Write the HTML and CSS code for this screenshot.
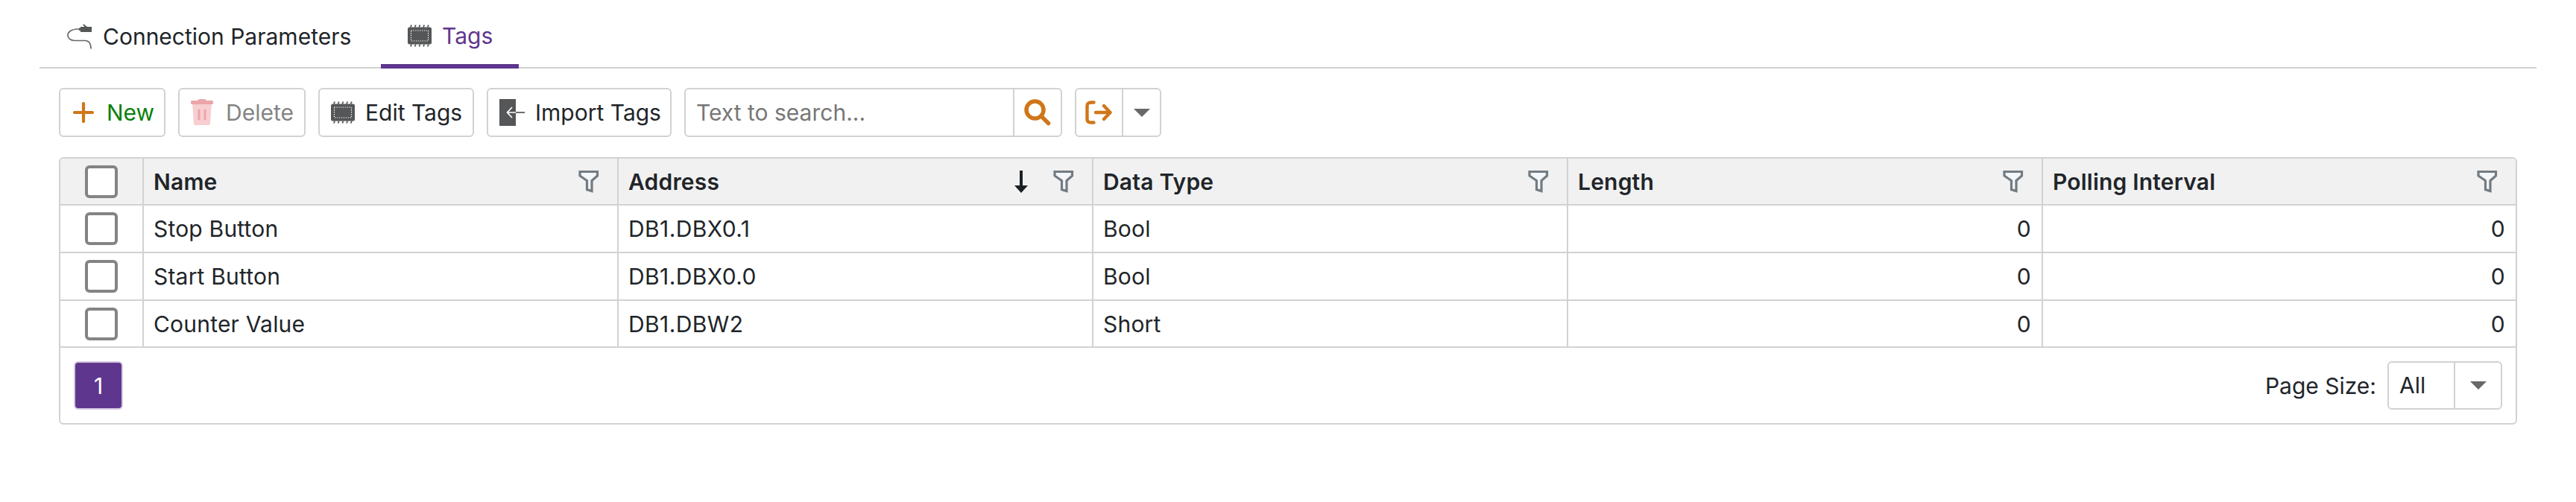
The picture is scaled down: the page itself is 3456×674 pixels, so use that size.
FILE: index.html
```html
<!DOCTYPE html>
<html lang="en">
<head>
    <meta charset="UTF-8">
    <meta name="viewport" content="width=device-width, initial-scale=1.0">
    <title>Tags</title>
    <link rel="stylesheet" href="styles.css">
</head>
<body>
    <!-- shared icons -->
    <svg class="sprite" aria-hidden="true">
        <symbol id="chip" viewBox="0 0 32 30">
            <path d="M4 3.500l1-3M9.700 3.500l1-3M15.400 3.500l1-3M21.100 3.500l1-3M26.800 3.500l1-3M4 29.500l1-3M9.700 29.500l1-3M15.400 29.500l1-3M21.100 29.500l1-3M26.800 29.500l1-3" stroke="#555" stroke-width="1.800"/>
            <rect x="0" y="3.500" width="32" height="23" rx="2.500" fill="#545657"/>
            <rect x="4.500" y="8" width="23" height="14" fill="none" stroke="#fff" stroke-width="1.200" stroke-dasharray="1.300 1.600"/>
        </symbol>
        <symbol id="filter" viewBox="0 0 28 32">
            <path d="M2 2.500h23.500V8L18 14.500v14l-6.500-2v-12L2 8z" fill="#f3f7fa" stroke="#737b82" stroke-width="3.200"/>
        </symbol>
        <symbol id="caret" viewBox="0 0 22 11">
            <path d="M0 0h22L11 11z" fill="#66686a"/>
        </symbol>
    </svg>

    <div class="tabs">
        <div class="tab">
            <svg class="tab-icon" viewBox="0 0 34 34">
                <path d="M17 7h-4C-3 8-2 22 10 22.500h14q8 0 8 11" fill="none" stroke="#66686a" stroke-width="1.700"/>
                <path d="M16 5.500h2V4h5.500l-2.500-3 1.500-.5L27 4h6v7H18V9h-2z" fill="#545657"/>
            </svg>
            <span>Connection Parameters</span>
        </div>
        <div class="tab active">
            <svg class="chip"><use href="#chip"/></svg>
            <span>Tags</span>
        </div>
    </div>

    <div class="toolbar">
        <button class="btn btn-new">
            <svg width="30" height="28" viewBox="0 0 30 28"><path d="M15 2v24M3 14h24" stroke="#d0761a" stroke-width="4.200" stroke-linecap="round"/></svg>
            <span>New</span>
        </button>
        <button class="btn btn-delete" disabled>
            <svg width="32" height="36" viewBox="0 0 32 36">
                <path d="M3 5h26l-2 28q0 2-3 2H8q-3 0-3-2z" fill="#f7ced1"/>
                <path d="M2 2h8q1-2 3-2h6q2 0 3 2h8q1 0 1 2.500T30 7H2Q1 7 1 4.500T2 2z" fill="#eca5a8"/>
                <path d="M12 15v12M20 15v12" stroke="#eca5a8" stroke-width="3" stroke-linecap="round"/>
            </svg>
            <span>Delete</span>
        </button>
        <button class="btn btn-edit">
            <svg class="chip"><use href="#chip"/></svg>
            <span>Edit Tags</span>
        </button>
        <button class="btn btn-import">
            <svg width="34" height="36" viewBox="0 0 34 36">
                <rect width="22" height="36" fill="#545657"/>
                <path d="M17 11l-6.500 7 6.500 7M10.500 18H22" fill="none" stroke="#fff" stroke-width="1.700"/>
                <path d="M22 18h12" stroke="#545657" stroke-width="1.700"/>
            </svg>
            <span>Import Tags</span>
        </button>
        <div class="search">
            <input type="text" placeholder="Text to search...">
            <button>
                <svg width="36" height="36" viewBox="0 0 36 36"><circle cx="14.500" cy="14.500" r="11.500" fill="none" stroke="#d0761a" stroke-width="5.500"/><path d="M23.500 23.500l9 9" stroke="#d0761a" stroke-width="5.500" stroke-linecap="round"/></svg>
            </button>
        </div>
        <div class="export">
            <button class="export-main">
                <svg width="36" height="32" viewBox="0 0 36 32"><path d="M11.500 2.500H8Q2.500 2.500 2.500 7v18q0 4.500 5.500 4.500h3.500M14 16h19M25 7l8.500 9-8.500 9" fill="none" stroke="#d0761a" stroke-width="4.400" stroke-linecap="round" stroke-linejoin="round"/></svg>
            </button>
            <button class="export-drop"><svg class="caret"><use href="#caret"/></svg></button>
        </div>
    </div>

    <div class="grid">
        <table>
            <thead>
                <tr>
                    <th class="check"><span class="box"></span></th>
                    <th><div class="head"><span class="title">Name</span><svg class="filter"><use href="#filter"/></svg></div></th>
                    <th><div class="head"><span class="title">Address</span><svg class="sort" viewBox="0 0 18 30"><path d="M7 0h4v20h7L9 30 0 20h7z" fill="#1c2023"/></svg><svg class="filter"><use href="#filter"/></svg></div></th>
                    <th><div class="head"><span class="title">Data Type</span><svg class="filter"><use href="#filter"/></svg></div></th>
                    <th><div class="head"><span class="title">Length</span><svg class="filter"><use href="#filter"/></svg></div></th>
                    <th><div class="head"><span class="title">Polling Interval</span><svg class="filter"><use href="#filter"/></svg></div></th>
                </tr>
            </thead>
            <tbody>
                <tr>
                    <td class="check"><span class="box"></span></td>
                    <td>Stop Button</td>
                    <td class="address">DB1.DBX0.1</td>
                    <td>Bool</td>
                    <td class="num">0</td>
                    <td class="num">0</td>
                </tr>
                <tr>
                    <td class="check"><span class="box"></span></td>
                    <td>Start Button</td>
                    <td class="address">DB1.DBX0.0</td>
                    <td>Bool</td>
                    <td class="num">0</td>
                    <td class="num">0</td>
                </tr>
                <tr>
                    <td class="check"><span class="box"></span></td>
                    <td>Counter Value</td>
                    <td class="address">DB1.DBW2</td>
                    <td>Short</td>
                    <td class="num">0</td>
                    <td class="num">0</td>
                </tr>
            </tbody>
        </table>
        <div class="pager">
            <button class="page">1</button>
            <div class="page-size">
                <span>Page Size:</span>
                <div class="combo">
                    <span class="value">All</span>
                    <button><svg class="caret"><use href="#caret"/></svg></button>
                </div>
            </div>
        </div>
    </div>
</body>
</html>
```

FILE: styles.css
```css
* {
    box-sizing: border-box;
}

body {
    margin: 0;
    padding: 0 53px;
    background: #fff;
    color: #212529;
    font-family: Inter, 'Liberation Sans', sans-serif;
    font-size: 30px;
    line-height: 36px;
}

button,
input {
    margin: 0;
    padding: 0;
    border: none;
    background: none;
    color: inherit;
    font: inherit;
}

svg {
    display: block;
    flex: none;
}

.sprite {
    position: absolute;
    width: 0;
    height: 0;
}

.chip {
    width: 32px;
    height: 30px;
}

.caret {
    width: 22px;
    height: 11px;
}

/* tabs */
.tabs {
    display: flex;
    height: 92px;
    border-bottom: 2px solid #d2d2d2;
}

.tab {
    display: flex;
    align-items: center;
    gap: 14px;
    width: 458px;
    height: 92px;
    padding: 5px 0 0 37px;
}

.tab-icon {
    width: 34px;
    height: 34px;
}

.tab.active {
    width: 185px;
    padding: 10px 0 0 36px;
    border-bottom: 6px solid #5f368d;
    color: #5f368d;
}

/* toolbar */
.toolbar {
    display: flex;
    gap: 17px;
    padding: 26px 26px 27px;
}

.btn {
    display: flex;
    align-items: center;
    height: 66px;
    border: 2px solid #d2d2d2;
    border-radius: 6px;
    white-space: nowrap;
}

.btn-new {
    width: 143px;
    padding-left: 16px;
    gap: 16px;
    color: #0a800a;
}

.btn-delete {
    width: 171px;
    padding-left: 14px;
    gap: 16px;
    color: #848484;
}

.btn-edit {
    width: 209px;
    padding-left: 15px;
    gap: 14px;
}

.btn-import {
    width: 248px;
    padding-left: 15px;
    gap: 14px;
}

.search,
.export {
    display: flex;
    height: 66px;
    border: 2px solid #d2d2d2;
    border-radius: 6px;
}

.search {
    width: 507px;
}

.search input {
    width: 439px;
    padding-left: 14px;
    outline: none;
}

.search input::placeholder {
    color: #777;
    opacity: 1;
}

.search button,
.export-drop {
    flex: 1;
    display: flex;
    align-items: center;
    justify-content: center;
    border-left: 2px solid #d2d2d2;
}

.export {
    width: 116px;
}

.export-main {
    display: flex;
    align-items: center;
    width: 61px;
    padding-left: 12px;
}

/* grid */
.grid {
    width: 3298px;
    height: 359px;
    margin-left: 26px;
    border: 2px solid #d2d2d2;
    border-radius: 6px;
    overflow: hidden;
}

table {
    width: 100%;
    table-layout: fixed;
    border-collapse: separate;
    border-spacing: 0;
}

th,
td {
    width: 637px;
    height: 64px;
    padding: 0 14px 0 13px;
    border-right: 2px solid #d2d2d2;
    border-bottom: 2px solid #d2d2d2;
    text-align: left;
    letter-spacing: 0.2px;
}

th {
    height: 63px;
    background: #f1f1f1;
    font-weight: 600;
}

tbody tr:last-child td {
    height: 63px;
}

th:last-child,
td:last-child {
    width: auto;
    border-right: none;
}

.check {
    width: 112px;
    padding: 0 0 0 33px;
}

.box {
    display: block;
    width: 44px;
    height: 44px;
    border: 4px solid #848484;
    border-radius: 6px;
    background: #fff;
}

.address {
    letter-spacing: 0.4px;
}

.num {
    text-align: right;
}

.head {
    display: flex;
    align-items: center;
}

.title {
    flex: 1;
}

.sort {
    width: 18px;
    height: 30px;
    margin-right: 34px;
}

.filter {
    width: 28px;
    height: 32px;
    margin-right: 10px;
}

/* pager */
.pager {
    display: flex;
    justify-content: space-between;
    padding: 18px 18px 0;
}

.page {
    width: 66px;
    height: 65px;
    border: 2px solid #d5c8e2;
    border-radius: 6px;
    background: #5f368d;
    color: #fff;
}

.page-size {
    display: flex;
    align-items: center;
    gap: 15px;
}

.combo {
    display: flex;
    width: 154px;
    height: 65px;
    border: 2px solid #d2d2d2;
    border-radius: 6px;
}

.value {
    width: 87px;
    padding-left: 14px;
    line-height: 61px;
}

.combo button {
    flex: 1;
    display: flex;
    align-items: center;
    justify-content: center;
    border-left: 2px solid #d2d2d2;
}
```
